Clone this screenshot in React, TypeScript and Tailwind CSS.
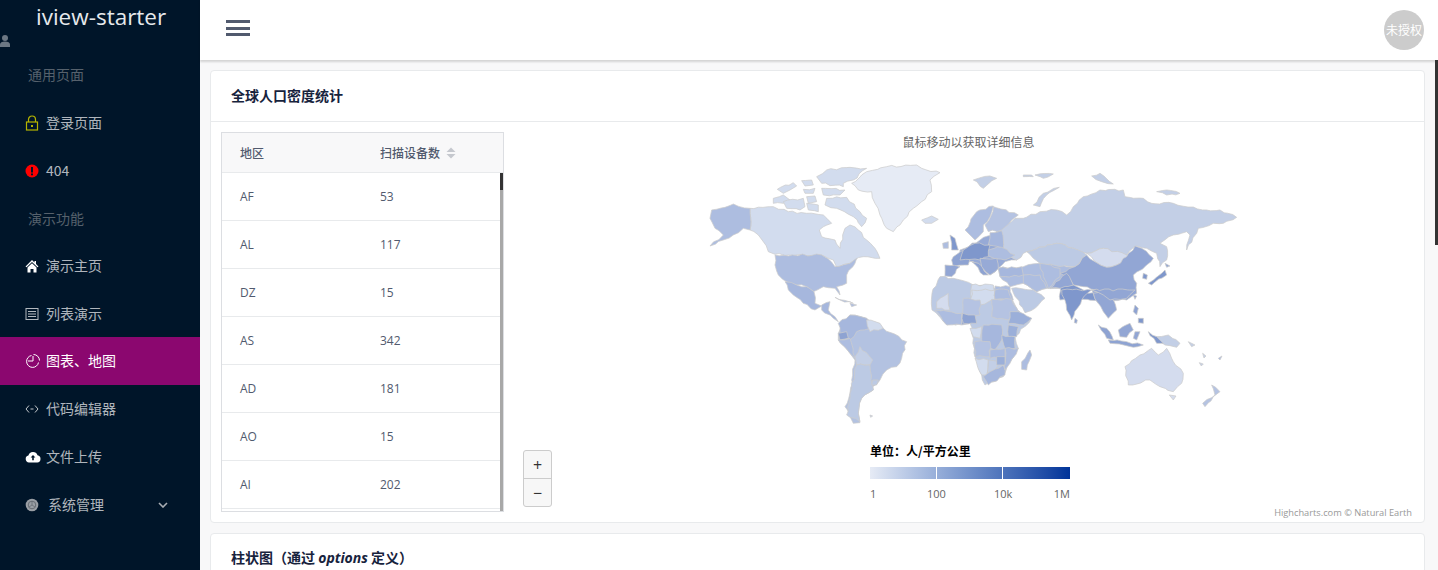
import { ReactNode } from 'react';

const cjk = '"Noto Sans CJK SC", sans-serif';

type Region = { fill: string; points: string };

// drawn first so the continents have no holes between the countries
const baseNe: Region[] = [
  { fill: '#97aad6', points: '0,270 60,240 125,210 130,270 170,300 135,305 115,325 90,345 40,305 0,300' },
  { fill: '#adbde0', points: '115,325 190,320 240,310 345,320 345,375 300,385 260,385 230,395 190,370 150,380 120,350' },
];
const baseSe: Region[] = [
  { fill: '#bccae4', points: '-84,10 -60,-40 -20,-35 40,-15 105,-5 145,0 165,45 185,70 215,85 165,140 175,175 150,215 130,260 75,285 65,255 45,200 40,145 30,100 -39,105 -84,60' },
];
const baseSw: Region[] = [
  { fill: '#b3c2e1', points: '445,130 480,75 530,85 580,115 650,155 635,205 620,230 590,240 570,270 548,290 550,300 515,325 505,370 510,398 490,400 465,350 480,310 495,210 480,190 445,150' },
];

const nw: Region[] = [
  { fill: '#e6ebf5', points: '485,70 530,35 590,20 680,15 695,25 750,38 720,60 725,95 695,125 670,145 640,180 610,215 590,205 570,165 555,130 545,95 505,90' },
  { fill: '#d2dcee', points: '380,50 410,30 480,22 530,25 490,60 460,70 460,80 395,70' },
  { fill: '#d2dcee', points: '262,88 310,68 320,78 300,90 280,100' },
  { fill: '#d2dcee', points: '335,62 365,60 370,75 345,78' },
  { fill: '#d2dcee', points: '340,88 375,85 370,100 345,100' },
  { fill: '#d2dcee', points: '395,85 465,90 450,105 400,105' },
  { fill: '#d2dcee', points: '250,115 280,105 300,120 280,130 250,130' },
  { fill: '#d2dcee', points: '280,125 340,115 345,140 330,150 290,145' },
  { fill: '#d2dcee', points: '350,110 375,108 380,125 355,130' },
  { fill: '#d2dcee', points: '350,130 385,135 385,155 355,150' },
  { fill: '#d2dcee', points: '410,115 470,112 510,155 530,175 515,200 490,170 440,145 405,135' },
  { fill: '#d2dcee', points: '180,145 250,140 295,155 350,160 400,165 425,190 388,210 395,230 435,240 450,265 458,225 465,205 480,195 505,210 530,240 555,265 570,295 520,290 495,300 480,310 440,322 430,300 415,295 395,285 255,283 235,275 220,245 205,225 180,210' },
  { fill: '#d2dcee', points: '695,180 725,168 745,178 725,190 705,190' },
  { fill: '#adbde0', points: '255,285 395,285 415,297 435,320 480,310 500,295 495,310 470,345 470,370 440,380 450,405 435,385 400,380 370,395 350,380 320,375 290,365 265,345 255,315' },
  { fill: '#adbde0', points: '65,150 130,132 180,145 180,210 160,205 130,225 60,258 100,225 75,205 60,175' },
  { fill: '#7f97cc', points: '780,225 795,235 805,270 785,270 785,250' },
  { fill: '#adbde0', points: '758,250 775,245 775,265 760,265' },
  { fill: '#8ea3d2', points: '790,290 825,270 840,285 835,315 790,320 785,300' },
  { fill: '#92a6d4', points: '765,315 810,320 785,350 765,348' },
];

const ne: Region[] = [
  { fill: '#c3cfe6', points: '120,205 165,175 190,175 240,155 290,150 320,165 340,140 370,110 420,90 490,90 495,110 550,115 575,130 640,130 740,150 780,150 830,172 790,190 760,190 715,205 680,270 690,225 680,215 640,225 600,250 620,260 620,300 600,320 590,280 560,265 530,258 500,285 450,280 430,265 380,280 340,265 290,250 200,275 170,300 130,270' },
  { fill: '#c3cfe6', points: '220,135 250,100 298,82 260,105 240,140' },
  { fill: '#c3cfe6', points: '40,60 90,48 110,55 70,85' },
  { fill: '#c3cfe6', points: '190,45 215,45 220,50 190,50' },
  { fill: '#c3cfe6', points: '225,45 280,42 250,55' },
  { fill: '#c3cfe6', points: '395,48 420,40 460,72 425,65' },
  { fill: '#c3cfe6', points: '590,95 620,90 660,100 620,105' },
  { fill: '#adbde0', points: '15,210 50,155 100,138 90,170 70,195 70,215 45,240 30,225' },
  { fill: '#b5c3e2', points: '100,140 175,165 155,180 125,210 85,215 75,195 92,170' },
  { fill: '#a6b7dd', points: '90,218 125,212 130,270 125,265 85,255' },
  { fill: '#adbde0', points: '60,270 125,262 165,285 135,300 90,290' },
  { fill: '#7f97cc', points: '10,270 45,250 90,255 85,290 60,300 0,300' },
  { fill: '#8ea3d2', points: '35,305 55,310 85,345 70,345' },
  { fill: '#97aad6', points: '60,295 110,295 115,325 90,345 65,320' },
  { fill: '#a6b7dd', points: '115,325 185,320 190,345 120,350' },
  { fill: '#bccae4', points: '200,275 290,250 340,265 380,285 345,320 300,320 240,310 220,295' },
  { fill: '#d4dcee', points: '380,280 430,265 500,285 520,280 470,315 440,322 405,305' },
  { fill: '#adbde0', points: '240,310 300,325 300,350 265,385 250,350' },
  { fill: '#92a6d4', points: '345,320 380,285 405,305 440,322 470,315 500,290 525,258 545,265 580,295 560,315 520,345 530,370 530,400 500,420 430,420 410,390 370,380 340,375 320,350 300,340' },
  { fill: '#7f97cc', points: '300,380 340,375 385,400 420,400 420,420 300,420' },
  { fill: '#92a6d4', points: '270,385 320,340 340,375 300,385' },
  { fill: '#adbde0', points: '190,345 240,345 260,385 230,395 190,370' },
  { fill: '#d2dcee', points: '35,375 100,375 100,420 35,420' },
  { fill: '#adbde0', points: '105,378 150,380 160,420 105,420' },
  { fill: '#7f97cc', points: '550,340 562,345 560,358 548,355' },
  { fill: '#7f97cc', points: '565,370 605,340 615,330 620,345 575,375' },
  { fill: '#8ea3d2', points: '615,310 630,318 620,322' },
];

const sw: Region[] = [
  { fill: '#a6b7dd', points: '285,-25 320,-15 350,-10 372,5 375,40 395,48 375,60 340,40 310,15 295,0' },
  { fill: '#a6b7dd', points: '395,45 420,35 415,60 445,95 430,85 395,60' },
  { fill: '#adbde0', points: '435,22 490,40 450,30' },
  { fill: '#adbde0', points: '480,40 500,45 485,50' },
  { fill: '#a6b7dd', points: '445,100 480,75 530,85 540,115 500,125 480,150 450,130' },
  { fill: '#d2dcee', points: '530,90 570,100 580,115 540,125' },
  { fill: '#8ea3d2', points: '445,130 470,125 475,145 450,150' },
  { fill: '#adbde0', points: '445,150 480,145 495,205 480,190' },
  { fill: '#c3cfe6', points: '495,200 510,170 548,210 540,225 500,225' },
  { fill: '#bccae4', points: '500,225 540,225 548,285 550,300 515,325 505,370 510,395 470,375 480,310' },
  { fill: '#bccae4', points: '548,270 565,270 560,285 545,285' },
  { fill: '#c3cfe6', points: '540,375 548,378 542,382' },
  { fill: '#d4dcee', points: '740,35 775,10 780,60 740,55' },
  { fill: '#92a6d4', points: '815,70 840,70 840,100 815,105' },
  { fill: '#adbde0', points: '735,60 815,70 815,105 770,105' },
];

const se: Region[] = [
  { fill: '#d2dcee', points: '35,0 105,0 105,28 60,45 35,40' },
  { fill: '#adbde0', points: '105,0 145,0 155,28 105,28' },
  { fill: '#b5c3e2', points: '10,25 60,30 60,75 10,80' },
  { fill: '#b5c3e2', points: '95,28 155,28 175,65 145,90 95,80' },
  { fill: '#8ea3d2', points: '8,70 45,75 50,100 10,100' },
  { fill: '#9bafd9', points: '150,65 175,65 215,85 190,105 145,100' },
  { fill: '#9bafd9', points: '145,105 175,110 170,140 145,140' },
  { fill: '#a6b7dd', points: '70,105 125,105 125,150 105,180 65,160' },
  { fill: '#d2dcee', points: '30,115 65,110 60,145 40,140' },
  { fill: '#b5c3e2', points: '45,155 90,155 90,200 45,200' },
  { fill: '#9bafd9', points: '125,135 165,140 165,175 135,175' },
  { fill: '#d2dcee', points: '45,205 85,210 80,255 65,255' },
  { fill: '#c3cfe6', points: '85,210 115,215 105,245 82,248' },
  { fill: '#a6b7dd', points: '70,260 90,245 130,225 135,255 85,285' },
  { fill: '#adbde0', points: '135,175 175,175 150,220 135,240' },
  { fill: '#adbde0', points: '90,180 135,175 135,200 90,205' },
  { fill: '#9bafd9', points: '110,200 135,200 135,225 110,225' },
  { fill: '#adbde0', points: '210,180 215,195 200,240 185,238 185,215' },
  { fill: '#bccae4', points: '155,-5 220,0 255,25 225,55 195,68' },
  { fill: '#7f97cc', points: '305,0 395,0 365,30 335,90 320,60' },
  { fill: '#8ea3d2', points: '345,85 352,90 350,100 343,98' },
  { fill: '#92a6d4', points: '395,0 430,15 415,40 400,10' },
  { fill: '#92a6d4', points: '400,10 450,10 470,60 445,85 430,65 415,40' },
  { fill: '#8ea3d2', points: '415,105 440,115 460,150 440,145' },
  { fill: '#8ea3d2', points: '445,150 500,155 550,165 520,172 450,160' },
  { fill: '#92a6d4', points: '475,120 510,100 520,120 500,142 480,140' },
  { fill: '#92a6d4', points: '525,125 540,125 530,150 520,145' },
  { fill: '#c3cfe6', points: '590,140 625,135 660,160 650,172 615,165' },
  { fill: '#7f97cc', points: '565,125 590,140 610,160 590,160' },
  { fill: '#8ea3d2', points: '525,45 535,55 530,75 520,65' },
  { fill: '#7f97cc', points: '535,85 550,85 550,100 535,98' },
  { fill: '#8ea3d2', points: '520,15 530,18 525,28' },
  { fill: '#d4dcee', points: '495,230 540,195 575,175 595,195 620,175 640,215 670,250 665,280 640,305 600,290 570,270 505,285' },
  { fill: '#d4dcee', points: '628,315 648,318 640,330' },
  { fill: '#b5c3e2', points: '755,285 780,305 760,320 735,350 728,340 765,315' },
  { fill: '#92a6d4', points: '395,0 525,0 500,25 450,30 430,15' },
  { fill: '#c3cfe6', points: '685,155 705,165 695,170' },
  { fill: '#c3cfe6', points: '728,190 738,198 732,204' },
  { fill: '#c3cfe6', points: '718,218 730,222 724,228' },
  { fill: '#adbde0', points: '775,205 786,198 780,210' },
];

const quadrants: { id: string; x: number; y: number; regions: Region[] }[] = [
  { id: 'base-ne', x: 270, y: 0, regions: baseNe },
  { id: 'base-se', x: 270, y: 130, regions: baseSe },
  { id: 'base-sw', x: 0, y: 130, regions: baseSw },
  { id: 'nw', x: 0, y: 0, regions: nw },
  { id: 'ne', x: 270, y: 0, regions: ne },
  { id: 'sw', x: 0, y: 130, regions: sw },
  { id: 'se', x: 270, y: 130, regions: se },
];

// breaks the long straight edges up so that they read as a coastline
const roughen = (points: string) => {
  const pts = points.split(' ').map((p) => p.split(',').map(Number));
  const out: string[] = [];
  pts.forEach(([x, y], i) => {
    const [nx, ny] = pts[(i + 1) % pts.length];
    const steps = Math.max(1, Math.floor(Math.hypot(nx - x, ny - y) / 13));
    out.push(`${x},${y}`);
    for (let s = 1; s < steps; s++) {
      const px = x + ((nx - x) * s) / steps;
      const py = y + ((ny - y) * s) / steps;
      const noise = Math.sin(px * 12.9898 + py * 78.233) * 43758.5453;
      const a = (noise - Math.floor(noise)) * 6.28;
      out.push(`${(px + Math.cos(a) * 3).toFixed(1)},${(py + Math.sin(a) * 3).toFixed(1)}`);
    }
  });
  return out.join(' ');
};

const WorldMap = () => (
  <svg className="absolute left-[168px] top-[28px]" width="560" height="280" viewBox="0 0 560 280">
    {quadrants.map((q) => (
      <g key={q.id} transform={`translate(${q.x} ${q.y}) scale(0.3333)`}>
        {q.regions.map((r, i) => (
          <polygon key={i} points={roughen(r.points)} fill={r.fill} stroke="#cccccc" strokeWidth="2.2" strokeLinejoin="round" />
        ))}
      </g>
    ))}
  </svg>
);

const LockIcon = () => (
  <svg width="14" height="16" viewBox="0 0 14 16" fill="none" stroke="#b4b400" strokeWidth="1.2">
    <rect x="1.5" y="7" width="11" height="8" />
    <path d="M3.5 7V4.5a3.5 3.5 0 0 1 7 0V7" />
    <rect x="6" y="10" width="2" height="2" fill="#b4b400" stroke="none" />
  </svg>
);

const AlertIcon = () => (
  <svg width="14" height="14" viewBox="0 0 14 14">
    <circle cx="7" cy="7" r="6.5" fill="#ff0000" />
    <rect x="6" y="3" width="2" height="5.5" fill="#001529" />
    <rect x="6" y="9.5" width="2" height="1.8" fill="#001529" />
  </svg>
);

const HomeIcon = () => (
  <svg width="14" height="14" viewBox="0 0 14 14" fill="#ffffff">
    <path d="M7 1 0.5 7.5 1.5 8.3 7 3l5.5 5.3 1-.8L11 5V2H9.5v1.5z" />
    <path d="M2.5 8.5 7 4.2l4.5 4.3V13.5H8.5V10h-3v3.5h-3z" />
  </svg>
);

const ListIcon = () => (
  <svg width="14" height="14" viewBox="0 0 14 14" fill="none" stroke="#b3b9bf" strokeWidth="1">
    <rect x="1" y="1.5" width="12" height="11" />
    <path d="M3 4.5h8M3 7h8M3 9.5h8" />
  </svg>
);

const PieIcon = () => (
  <svg width="16" height="16" viewBox="0 0 16 16" fill="none" stroke="#ffffff" strokeWidth="1">
    <path d="M6.5 2.5a6 6 0 1 0 7 7" />
    <path d="M8.5 1.5a6 6 0 0 1 6 6" />
    <path d="M8 3v5H3" />
  </svg>
);

const CodeIcon = () => (
  <svg width="14" height="10" viewBox="0 0 14 10" fill="none" stroke="#c4c8cc" strokeWidth="1">
    <path d="M4 1.5 1 5l3 3.5M10 1.5 13 5l-3 3.5M5.5 5h3" />
  </svg>
);

const CloudIcon = () => (
  <svg width="16" height="12" viewBox="0 0 16 12">
    <path d="M4 11.5a3.5 3.5 0 0 1-.6-6.9A4.8 4.8 0 0 1 12.5 4.2 3.7 3.7 0 0 1 12.3 11.5z" fill="#ffffff" />
    <path d="M8 4 5.6 6.6H7.2V9.2H8.8V6.6H10.4z" fill="#001529" />
  </svg>
);

const GearIcon = () => (
  <svg width="14" height="14" viewBox="0 0 14 14">
    <circle cx="7" cy="7" r="6.3" fill="#9a9fa5" />
    <circle cx="7" cy="7" r="3.8" fill="none" stroke="#666c73" strokeWidth="1" />
    <path d="M7 3.2V7M7 7l3 2M7 7 4 9" stroke="#666c73" strokeWidth="0.8" />
  </svg>
);

const NavItem = ({
  icon,
  label,
  active,
  h = 'h-12',
}: {
  icon: ReactNode;
  label: string;
  active?: boolean;
  h?: string;
}) => (
  <div
    className={`flex items-center pl-[26px] text-sm ${h} ${
      active ? 'bg-[#8b076f] text-white' : 'text-white/70'
    }`}
  >
    <span className="-ml-px flex w-[21px] shrink-0 items-center justify-start">{icon}</span>
    <span className="pb-[2px]">{label}</span>
  </div>
);

const Sidebar = () => (
  <aside className="flex h-full w-[200px] shrink-0 flex-col bg-[#001529]" style={{ fontFamily: cjk }}>
    <div className="relative h-[51px] shrink-0">
      <div
        className="absolute left-[36px] top-0 text-[22.5px] leading-[34px] text-[#e6e9ec]"
        style={{ fontFamily: '"Open Sans", sans-serif' }}
      >
        iview-starter
      </div>
      <svg className="absolute left-0 top-[35px]" width="10" height="12" viewBox="0 0 10 12" fill="#6c7783">
        <circle cx="5" cy="3" r="3" />
        <path d="M0 12V9.5C0 7.5 2 6.5 5 6.5S10 7.5 10 9.5V12z" />
      </svg>
    </div>
    <div className="flex h-12 items-center pb-[2px] pl-[28px] text-sm text-[#56616c]">通用页面</div>
    <NavItem icon={<LockIcon />} label="登录页面" />
    <NavItem icon={<AlertIcon />} label="404" />
    <div className="flex h-[47px] items-center pb-[2px] pl-[28px] text-sm text-[#56616c]">演示功能</div>
    <NavItem icon={<HomeIcon />} label="演示主页" />
    <NavItem icon={<ListIcon />} label="列表演示" h="h-[47px]" />
    <NavItem icon={<PieIcon />} label="图表、地图" active />
    <NavItem icon={<CodeIcon />} label="代码编辑器" />
    <NavItem icon={<CloudIcon />} label="文件上传" />
    <div className="flex h-12 items-center pl-[26px] pr-[32px] text-sm text-white/70">
      <span className="-ml-px flex w-[23px] shrink-0 items-center">
        <GearIcon />
      </span>
      <span className="flex-1 pb-[2px]">系统管理</span>
      <svg width="10" height="6" viewBox="0 0 10 6" fill="none" stroke="#a8adb3" strokeWidth="1.6">
        <path d="M1 1l4 4 4-4" />
      </svg>
    </div>
  </aside>
);

const rows = [
  ['AF', '53'],
  ['AL', '117'],
  ['DZ', '15'],
  ['AS', '342'],
  ['AD', '181'],
  ['AO', '15'],
  ['AI', '202'],
];

const DeviceTable = () => (
  <div className="relative h-[380px] w-[283px] shrink-0 overflow-hidden border border-[#dcdee2] text-xs text-[#515a6e]">
    <div className="flex h-10 items-center border-b border-[#e8eaec] bg-[#f8f8f9] pl-[18px] font-medium">
      <span className="w-[140px]">地区</span>
      <span>扫描设备数</span>
      <svg className="ml-[6px]" width="10" height="12" viewBox="0 0 10 12" fill="#c5c8ce">
        <path d="M5 0.5 9.5 5H0.5zM5 11.5 0.5 7H9.5z" />
      </svg>
    </div>
    {rows.map(([code, count]) => (
      <div
        key={code}
        className="flex h-12 items-center border-b border-[#e8eaec] pl-[18px] pt-[1px]"
        style={{ fontFamily: '"Open Sans", "Noto Sans CJK SC", sans-serif' }}
      >
        <span className="w-[140px]">{code}</span>
        <span>{count}</span>
      </div>
    ))}
    <div className="absolute right-0 top-10 bottom-0 w-[3px] bg-[#a8a8a8]">
      <div className="h-[17px] bg-[#333333]" />
    </div>
  </div>
);

const ChartPanel = () => (
  <div className="relative h-[390px] flex-1" style={{ fontFamily: '"Open Sans", "Noto Sans CJK SC", sans-serif' }}>
    <div className="pr-[8px] pt-[1px] text-center text-xs leading-[18px] text-[#666666]" style={{ fontFamily: cjk }}>
      鼠标移动以获取详细信息
    </div>
    <WorldMap />
    <div className="absolute left-[1px] top-[318px] flex w-[29px] flex-col overflow-hidden rounded-[3px] border border-[#cccccc] bg-[#f7f7f7] text-[#333333]">
      <div className="flex h-[28px] items-center justify-center border-b border-[#cccccc] text-[16px]">+</div>
      <div className="flex h-[27px] items-center justify-center text-[16px]">−</div>
    </div>
    <div className="absolute left-[348px] top-[311px] w-[200px]">
      <div className="text-xs font-bold leading-[16px] text-black" style={{ fontFamily: cjk }}>
        单位：人/平方公里
      </div>
      <div className="relative mt-[8px] h-3 w-[200px] bg-gradient-to-r from-[#e6ebf5] to-[#003399]">
        <div className="absolute left-[66px] top-0 h-full w-px bg-white" />
        <div className="absolute left-[132px] top-0 h-full w-px bg-white" />
      </div>
      <div className="relative mt-[8px] h-[14px] text-[11px] leading-[14px] text-[#666666]">
        <span className="absolute left-0">1</span>
        <span className="absolute left-[57px]">100</span>
        <span className="absolute left-[124px]">10k</span>
        <span className="absolute right-0">1M</span>
      </div>
    </div>
    <div className="absolute right-[11px] top-[375px] text-[9.25px] leading-[12px] text-[#999999]">
      Highcharts.com © Natural Earth
    </div>
  </div>
);

const Card = ({ title, children }: { title: ReactNode; children?: ReactNode }) => (
  <div className="rounded border border-[#e8eaec] bg-white">
    <div
      className="flex h-[51px] items-center border-b border-[#e8eaec] pb-[3px] pl-5 text-sm font-bold text-[#17233d]"
      style={{ fontFamily: cjk }}
    >
      {title}
    </div>
    {children}
  </div>
);

export default function App() {
  return (
    <div className="relative flex h-[570px] w-full overflow-hidden bg-[#f8f8f9]" style={{ fontFamily: cjk }}>
      <Sidebar />
      <div className="flex min-w-0 flex-1 flex-col">
        <header className="flex h-[60px] shrink-0 items-center justify-between bg-white pl-[26px] pr-[14px] shadow-[0_2px_2px_rgba(0,0,0,0.15)]">
          <div className="mb-[4px] flex w-[24px] flex-col gap-[3.5px]">
            <span className="h-[3px] bg-[#515a6e]" />
            <span className="h-[3px] bg-[#515a6e]" />
            <span className="h-[3px] bg-[#515a6e]" />
          </div>
          <div className="flex h-10 w-10 items-center justify-center rounded-full bg-[#cccccc] text-xs text-white">
            未授权
          </div>
        </header>
        <main className="flex flex-col gap-[10px] pl-[10px] pr-[13px] pt-[10px]">
          <Card title="全球人口密度统计">
            <div className="flex gap-[18px] pl-[10px] pr-[1px] pt-[10px]">
              <DeviceTable />
              <ChartPanel />
            </div>
          </Card>
          <Card
            title={
              <span>
                柱状图（通过 <i style={{ fontFamily: '"Open Sans", sans-serif' }}>options</i> 定义）
              </span>
            }
          />
        </main>
      </div>
      <div className="absolute right-0 top-[60px] h-[185px] w-[3px] bg-[#333333]" />
    </div>
  );
}
